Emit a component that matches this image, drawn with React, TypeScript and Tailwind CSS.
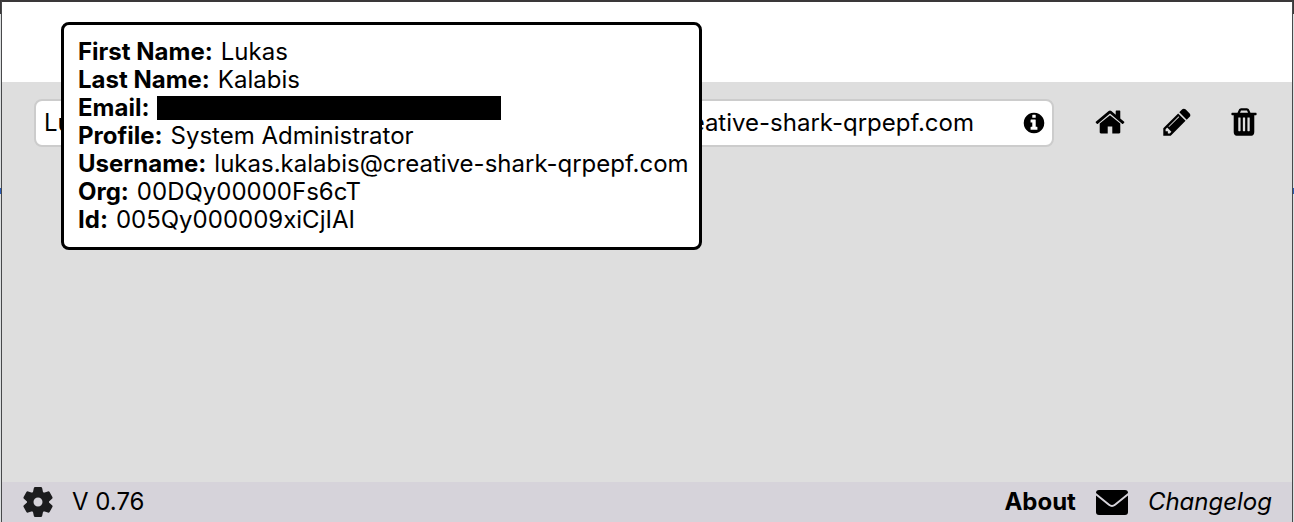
import type { ReactNode } from "react";

const HOME =
  "M1472 992v480q0 26-19 45t-45 19h-384v-384h-256v384h-384q-26 0-45-19t-19-45v-480q0-1 .5-3t.5-3l575-474 575 474q1 2 1 6zm223-69l-62 74q-8 9-21 11h-3q-13 0-21-7l-692-577-692 577q-12 8-24 7-13-2-21-11l-62-74q-8-10-7-23.500t11-21.500l719-599q32-26 76-26t76 26l244 204v-195q0-14 9-23t23-9h192q14 0 23 9t9 23v408l219 182q10 8 11 21.500t-7 23.500z";
const PENCIL =
  "M491 1536l91-91-235-235-91 91v107h128v128h107zm523-928q0-22-22-22-10 0-17 7l-542 542q-7 7-7 17 0 22 22 22 10 0 17-7l542-542q7-7 7-17zm-54-192l416 416-832 832h-416v-416zm683 96q0 53-37 90l-166 166-416-416 166-165q36-38 90-38 53 0 91 38l235 234q37 39 37 91z";
const TRASH =
  "M704 1376v-704q0-14-9-23t-23-9h-64q-14 0-23 9t-9 23v704q0 14 9 23t23 9h64q14 0 23-9t9-23zm256 0v-704q0-14-9-23t-23-9h-64q-14 0-23 9t-9 23v704q0 14 9 23t23 9h64q14 0 23-9t9-23zm256 0v-704q0-14-9-23t-23-9h-64q-14 0-23 9t-9 23v704q0 14 9 23t23 9h64q14 0 23-9t9-23zm-544-992h448l-48-117q-7-9-17-11h-317q-10 2-17 11zm928 32v64q0 14-9 23t-23 9h-96v948q0 83-47 143.500t-113 60.500h-832q-66 0-113-58.500t-47-141.500v-952h-96q-14 0-23-9t-9-23v-64q0-14 9-23t23-9h309l70-167q15-37 54-63t79-26h320q40 0 79 26t54 63l70 167h309q14 0 23 9t9 23z";
const INFO =
  "M1152 1376v-160q0-14-9-23t-23-9h-96v-512q0-14-9-23t-23-9h-320q-14 0-23 9t-9 23v160q0 14 9 23t23 9h96v320h-96q-14 0-23 9t-9 23v160q0 14 9 23t23 9h448q14 0 23-9t9-23zm-128-896v-160q0-14-9-23t-23-9h-192q-14 0-23 9t-9 23v160q0 14 9 23t23 9h192q14 0 23-9t9-23zm640 416q0 209-103 385.500t-279.500 279.500-385.500 103-385.500-103-279.500-279.500-103-385.500 103-385.500 279.500-279.500 385.500-103 385.500 103 279.500 279.500 103 385.500z";

function Glyph({ d, className }: { d: string; className: string }) {
  return (
    <svg viewBox="0 0 1792 1792" fill="currentColor" aria-hidden="true" className={className}>
      <path d={d} />
    </svg>
  );
}

function Gear() {
  return (
    <svg viewBox="-16 -16 32 32" fill="currentColor" aria-hidden="true" className="size-8">
      {[0, 60, 120, 180, 240, 300].map((angle) => (
        <path
          key={angle}
          transform={`rotate(${angle})`}
          d="M-5.4 -8 L-4.2 -13.800 Q-4 -15 -2.800 -15 H2.800 Q4 -15 4.200 -13.800 L5.400 -8 Z"
        />
      ))}
      <path
        fillRule="evenodd"
        d="M-11 0a11 11 0 1 0 22 0a11 11 0 1 0 -22 0zM-4.500 0a4.500 4.500 0 1 0 9 0a4.500 4.500 0 1 0 -9 0z"
      />
    </svg>
  );
}

function Envelope() {
  return (
    <svg viewBox="0 0 32 25" aria-hidden="true" className="h-[25px] w-8">
      <rect width="32" height="25" rx="3" fill="currentColor" />
      <path
        d="M-1 3.500 L13 14.800 Q16 17.200 19 14.800 L33 3.500"
        fill="none"
        stroke="#d6d3da"
        strokeWidth="1.900"
      />
    </svg>
  );
}

function Detail({ label, children }: { label: string; children: ReactNode }) {
  return (
    <div className="flex gap-2">
      <dt className="font-bold">{label}:</dt>
      <dd>{children}</dd>
    </div>
  );
}

export default function App() {
  return (
    <div className="flex min-h-screen flex-col bg-[linear-gradient(#3a3839_14px,#dcdfe0_14px,#dcdfe0_188px,#2a5db8_188px,#2a5db8_194px,#dcdfe0_194px)] px-px font-['Inter',sans-serif] text-2xl leading-7 text-black">
      <div className="flex flex-1 flex-col border-x border-t-2 border-x-[#48494b] border-t-[#3a3839] bg-[#dedede]">
        <header className="h-20 bg-white" />
        <main className="flex-1 px-8 pt-[17px]">
          <div className="flex items-center gap-10">
            <div className="relative flex h-12 min-w-0 flex-1 items-center rounded-lg border-2 border-[#cccccc] bg-white pr-1.5 pl-2">
              <span>Lukas</span>
              <span className="ml-auto">lukas.kalabis@creative-shark-qrpepf.com</span>
              <button type="button" aria-label="User details" className="ml-12 shrink-0">
                <Glyph d={INFO} className="size-6" />
              </button>
              <dl
                role="tooltip"
                className="absolute -top-[79px] left-[25px] z-10 w-max rounded-lg border-3 border-black bg-white py-[13px] pr-2.5 pl-3.5"
              >
                <Detail label="First Name">Lukas</Detail>
                <Detail label="Last Name">Kalabis</Detail>
                <Detail label="Email">
                  <span className="mt-0.5 block h-6 w-[344px] bg-black" />
                </Detail>
                <Detail label="Profile">System Administrator</Detail>
                <Detail label="Username">lukas.kalabis@creative-shark-qrpepf.com</Detail>
                <Detail label="Org">00DQy00000Fs6cT</Detail>
                <Detail label="Id">005Qy000009xiCjIAI</Detail>
              </dl>
            </div>
            <div className="mb-0.5 flex gap-[35px]">
              <button type="button" aria-label="Home">
                <Glyph d={HOME} className="size-8" />
              </button>
              <button type="button" aria-label="Edit">
                <Glyph d={PENCIL} className="size-8" />
              </button>
              <button type="button" aria-label="Delete">
                <Glyph d={TRASH} className="size-8" />
              </button>
            </div>
          </div>
        </main>
        <footer className="flex h-10 items-center bg-[#d6d3da] px-5">
          <button type="button" aria-label="Settings" className="text-[#1c1c1e]">
            <Gear />
          </button>
          <span className="ml-[18px]">V 0.76</span>
          <nav className="ml-auto flex items-center gap-5">
            <a href="#about" className="font-bold">
              About
            </a>
            <a href="#contact" aria-label="Contact">
              <Envelope />
            </a>
            <a href="#changelog" className="italic">
              Changelog
            </a>
          </nav>
        </footer>
      </div>
    </div>
  );
}
